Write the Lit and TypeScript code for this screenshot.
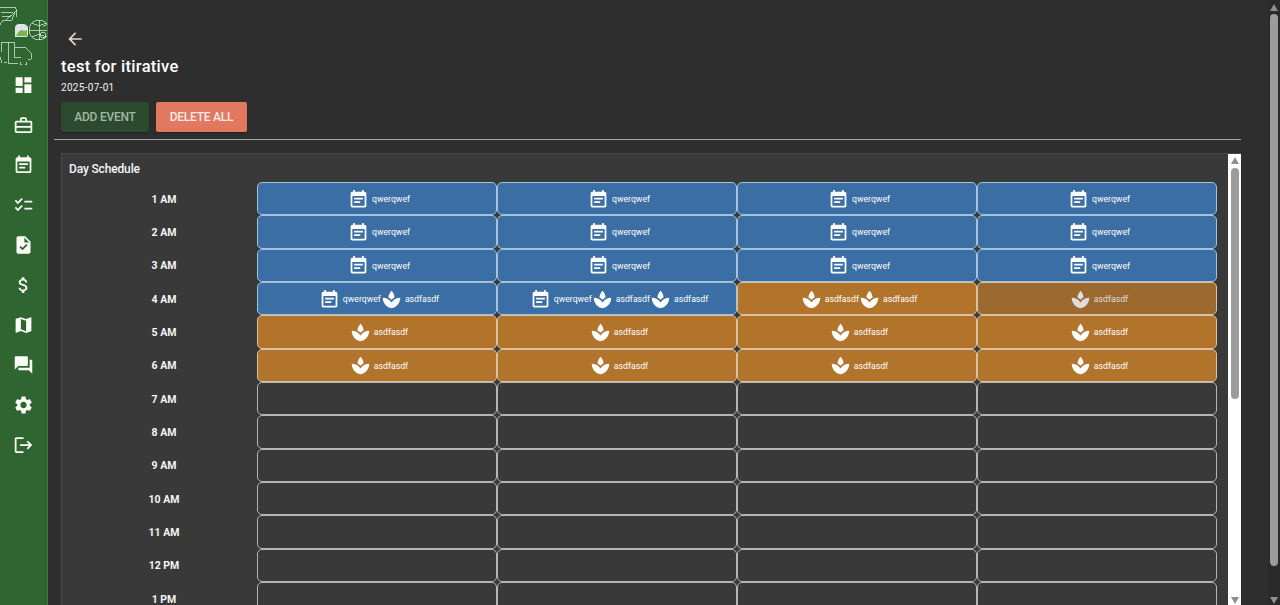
import { LitElement, html, css, svg } from "lit";
import { customElement } from "lit/decorators.js";

const P: Record<string, string> = {
  dash: "M3 13h8V3H3v10zm0 8h8v-6H3v6zm10 0h8V11h-8v10zm0-18v6h8V3h-8z",
  work: "M20 7h-4V5c0-1.1-.9-2-2-2h-4c-1.1 0-2 .9-2 2v2H4c-1.1 0-2 .9-2 2v10c0 1.1.9 2 2 2h16c1.1 0 2-.9 2-2V9c0-1.1-.9-2-2-2zM10 5h4v2h-4V5zM4 9h16v4H4V9zm0 10v-4h16v4H4z",
  note: "M17 10H7v2h10v-2zm2-7h-1V1h-2v2H8V1H6v2H5c-1.11 0-1.99.9-1.99 2L3 19c0 1.1.89 2 2 2h14c1.1 0 2-.9 2-2V5c0-1.1-.9-2-2-2zm0 16H5V8h14v11zm-5-5H7v2h7v-2z",
  check: "M22 7h-9v2h9V7zm0 8h-9v2h9v-2zM5.54 11L2 7.46l1.41-1.41 2.12 2.12 4.24-4.24 1.41 1.41L5.54 11zm0 8L2 15.46l1.41-1.41 2.12 2.12 4.24-4.24 1.41 1.41L5.54 19z",
  task: "M14 2H6c-1.1 0-1.99.9-1.99 2L4 20c0 1.1.89 2 1.99 2H18c1.1 0 2-.9 2-2V8l-6-6zm-3.06 16L7.4 14.46l1.41-1.41 2.12 2.12 4.24-4.24 1.41 1.41L10.94 18zM13 9V3.5L18.5 9H13z",
  money: "M11.8 10.9c-2.27-.59-3-1.2-3-2.15 0-1.09 1.01-1.85 2.7-1.85 1.78 0 2.44.85 2.5 2.1h2.21c-.07-1.72-1.12-3.3-3.21-3.81V3h-3v2.16c-1.94.42-3.5 1.68-3.5 3.61 0 2.31 1.91 3.46 4.7 4.13 2.5.6 3 1.48 3 2.41 0 .69-.49 1.79-2.7 1.79-2.06 0-2.87-.92-2.98-2.1h-2.2c.12 2.19 1.76 3.42 3.68 3.83V21h3v-2.15c1.95-.37 3.5-1.5 3.5-3.55 0-2.84-2.43-3.81-4.7-4.4z",
  map: "M20.5 3l-.16.03L15 5.1 9 3 3.36 4.9c-.21.07-.36.25-.36.48V20.5c0 .28.22.5.5.5l.16-.03L9 18.9l6 2.1 5.64-1.9c.21-.07.36-.25.36-.48V3.5c0-.28-.22-.5-.5-.5zM15 19l-6-2.11V5l6 2.11V19z",
  forum: "M21 6h-2v9H6v2c0 .55.45 1 1 1h11l4 4V7c0-.55-.45-1-1-1zm-4 6V3c0-.55-.45-1-1-1H3c-.55 0-1 .45-1 1v14l4-4h10c.55 0 1-.45 1-1z",
  gear: "M19.14 12.94c.04-.3.06-.61.06-.94 0-.32-.02-.64-.07-.94l2.03-1.58c.18-.14.23-.41.12-.61l-1.92-3.32c-.12-.22-.37-.29-.59-.22l-2.39.96c-.5-.38-1.03-.7-1.62-.94l-.36-2.54c-.04-.24-.24-.41-.48-.41h-3.84c-.24 0-.43.17-.47.41l-.36 2.54c-.59.24-1.13.57-1.62.94l-2.39-.96c-.22-.08-.47 0-.59.22L2.74 8.87c-.12.21-.08.47.12.61l2.03 1.58c-.05.3-.09.63-.09.94s.02.64.07.94l-2.03 1.58c-.18.14-.23.41-.12.61l1.92 3.32c.12.22.37.29.59.22l2.39-.96c.5.38 1.03.7 1.62.94l.36 2.54c.05.24.24.41.48.41h3.84c.24 0 .44-.17.47-.41l.36-2.54c.59-.24 1.13-.56 1.62-.94l2.39.96c.22.08.47 0 .59-.22l1.92-3.32c.12-.22.07-.47-.12-.61l-2.01-1.58zM12 15.6c-1.98 0-3.6-1.62-3.6-3.6s1.62-3.6 3.6-3.6 3.6 1.62 3.6 3.6-1.62 3.6-3.6 3.6z",
  logout: "M17 7l-1.41 1.41L18.17 11H8v2h10.17l-2.58 2.58L17 17l5-5zM4 5h8V3H4c-1.1 0-2 .9-2 2v14c0 1.1.9 2 2 2h8v-2H4V5z",
  back: "M20 11H7.83l5.59-5.59L12 4l-8 8 8 8 1.41-1.41L7.83 13H20v-2z",
  spa: "M15.49 9.63c-.18-2.79-1.31-5.51-3.43-7.63-2.14 2.14-3.32 4.86-3.55 7.63 1.28.68 2.46 1.56 3.49 2.63 1.03-1.06 2.21-1.94 3.49-2.63zm-6.5 2.65c-.14-.1-.3-.19-.45-.29.15.11.31.19.45.29zm6.42-.25c-.13.09-.27.16-.4.26.13-.1.27-.17.4-.26zM12 15.45C9.85 12.17 6.18 10 2 10c0 5.32 3.36 9.82 8.03 11.49.63.23 1.29.4 1.97.51.68-.12 1.33-.29 1.97-.51C18.64 19.82 22 15.32 22 10c-4.18 0-7.85 2.17-10 5.45z",
};

const icon = (name: string, cls = "") =>
  html`<svg class=${cls} viewBox="0 0 24 24"><path fill-rule="evenodd" d=${P[name]}></path></svg>`;

type Kind = "blue" | "orange" | "empty";
type Cell = { kind: Kind; items: string[]; dim?: boolean };

const Q = "q";
const A = "a";
const blue = (...items: string[]): Cell => ({ kind: "blue", items });
const orange = (...items: string[]): Cell => ({ kind: "orange", items });
const none: Cell = { kind: "empty", items: [] };

const ROWS: { label: string; cells: Cell[] }[] = [
  { label: "1 AM", cells: [blue(Q), blue(Q), blue(Q), blue(Q)] },
  { label: "2 AM", cells: [blue(Q), blue(Q), blue(Q), blue(Q)] },
  { label: "3 AM", cells: [blue(Q), blue(Q), blue(Q), blue(Q)] },
  { label: "4 AM", cells: [blue(Q, A), blue(Q, A, A), orange(A, A), { kind: "orange", items: [A], dim: true }] },
  { label: "5 AM", cells: [orange(A), orange(A), orange(A), orange(A)] },
  { label: "6 AM", cells: [orange(A), orange(A), orange(A), orange(A)] },
  ...["7 AM", "8 AM", "9 AM", "10 AM", "11 AM", "12 PM", "1 PM"].map((label) => ({
    label,
    cells: [none, none, none, none],
  })),
];

const NAV = ["dash", "work", "note", "check", "task", "money", "map", "forum", "gear", "logout"];

@customElement("app-root")
export class AppRoot extends LitElement {
  static styles = css`
    :host {
      display: flex;
      width: 1280px;
      height: 605px;
      overflow: hidden;
      background: #2e2e2e;
      color: #fff;
      font-family: Roboto, "Liberation Sans", sans-serif;
    }
    svg { display: block; fill: currentColor; flex: none; }
    .side {
      width: 47px;
      flex: none;
      background: #2e6530;
      border-right: 1px solid #44744a;
      display: flex;
      flex-direction: column;
      align-items: center;
    }
    svg.logo { width: 47px; height: 64.5px; flex: none; fill: none; shape-rendering: crispEdges; }
    .logo .solid { stroke: none; shape-rendering: auto; }
    .nav { width: 21px; height: 21px; padding: 9.5px 0; flex: none; box-sizing: content-box; color: #fdfdf8; }
    .main { flex: 1; min-width: 0; padding: 27px 27px 0 6px; display: flex; flex-direction: column; }
    .head { padding-left: 7px; display: flex; flex-direction: column; align-items: flex-start; }
    .back { width: 20px; height: 20px; margin: 2px 0 2px 4px; color: #e6d5c8; }
    h1 { margin: 6px 0 0; font-size: 16.5px; line-height: 20px; font-weight: 500; letter-spacing: 0.28px; }
    .date { margin-top: 5px; font-size: 10px; line-height: 12px; letter-spacing: 0.3px; color: #f2f2f2; }
    .btns { display: flex; gap: 7px; margin-top: 8px; }
    .btn {
      height: 30px;
      display: flex;
      align-items: center;
      justify-content: center;
      border-radius: 2px;
      font-size: 12px;
      font-weight: 500;
      letter-spacing: -0.25px;
      box-shadow: 0 1px 2px rgba(0, 0, 0, 0.3);
    }
    .add { width: 88px; background: #2b4a2e; color: #a3b8a3; }
    .del { width: 91px; background: #e2785f; color: #fbece8; }
    .rule { height: 1px; background: #a8a8a8; margin-top: 7px; flex: none; }
    .panel {
      margin: 13px 0 0 7px;
      flex: 1;
      min-height: 0;
      display: flex;
      background: #393939;
      border: 1px solid #4a4a4a;
      border-bottom: none;
      border-right: none;
      overflow: hidden;
    }
    .inner { flex: 1; min-width: 0; padding: 8px 0 0 7px; overflow: hidden; }
    .title { font-size: 12px; line-height: 14px; font-weight: 500; letter-spacing: -0.15px; color: #f5f5f5; margin-bottom: 6px; }
    .row { display: grid; grid-template-columns: 188px repeat(4, 240px); height: 33.33px; }
    .time {
      display: flex;
      align-items: center;
      justify-content: center;
      font-size: 10.5px;
      font-weight: 700;
      color: #f5f5f5;
      padding: 1px 0 0 2px;
    }
    .cell {
      box-sizing: border-box;
      border: 1px solid #b5b5b5;
      border-radius: 5px;
      display: flex;
      align-items: center;
      justify-content: center;
      padding: 1px 0 0 4px;
      min-width: 0;
      overflow: hidden;
    }
    .empty { background: #393939; }
    .blue { background: #3a6ea5; border-color: #a3c2de; }
    .orange { background: #b2742b; border-color: #d8c2a2; }
    .dim { background: #9c6a2f; color: #dddddd; }
    .item { display: flex; align-items: center; }
    .item svg { width: 21px; height: 21px; }
    .item span { font-size: 8.7px; line-height: 12px; margin-left: 3px; color: inherit; white-space: nowrap; }
    .bar { width: 13px; flex: none; display: flex; flex-direction: column; align-items: center; background: #fff; padding: 3px 0 0; box-sizing: border-box; }
    .pagebar { width: 12px; flex: none; display: flex; flex-direction: column; align-items: center; background: #2a2a2a; padding-top: 4px; box-sizing: border-box; }
    .up, .down { width: 0; height: 0; border-left: 4.5px solid transparent; border-right: 4.5px solid transparent; flex: none; }
    .up { border-bottom: 7px solid #8f8f8f; }
    .down { border-top: 7px solid #8f8f8f; }
    .thumb { width: 8px; background: #9c9c9c; border-radius: 4px; flex: none; }
    .bar .thumb { height: 231px; margin-top: 4px; }
    .gap { flex: 1; }
    .bar .down { margin-bottom: 1px; }
    .pagebar .thumb { height: 552px; margin-top: 3px; }
    .pagebar .down { margin-bottom: 1px; }
  `;

  private logo() {
    return svg`<svg class="logo" viewBox="0 0 47 64.5" stroke="#e6f0e2" stroke-width="0.7">
      <path d="M0 7h15l2 3-6 6H2M1 12h12M15 12l-3 8H3l-3 5M6 20l5-5M16 10v7"></path>
      <path d="M2 42h12l1 5h10l6 6v6h-3M1 42v10M2 63l-2-6M8 42v21h10M14 47v10h7M20 62a3 3 0 0 0 7 0M4 62h3"></path>
      <circle cx="39" cy="30" r="10"></circle>
      <path d="M29 30h20M39 20v20M32 23c4 3 10 3 14 0M32 37c4-3 10-3 14 0"></path>
      <circle cx="43" cy="35" r="3"></circle>
      <path d="M47 24l-4 3"></path>
      <path class="solid" d="M15 27q1-3 4-3h5q4 1 4 4v7q0 2-2 2H15z" fill="#dfe6ea"></path>
      <path class="solid" d="M17 34q4-6 7-3l3-1v6H16z" fill="#7ab64e"></path>
    </svg>`;
  }

  private item(t: string) {
    return html`<div class="item">${icon(t === Q ? "note" : "spa")}<span>${t === Q ? "qwerqwef" : "asdfasdf"}</span></div>`;
  }

  render() {
    return html`
      <aside class="side">
        ${this.logo()}
        ${NAV.map((n) => icon(n, "nav"))}
      </aside>
      <main class="main">
        <div class="head">
          ${icon("back", "back")}
          <h1>test for itirative</h1>
          <div class="date">2025-07-01</div>
          <div class="btns">
            <div class="btn add">ADD EVENT</div>
            <div class="btn del">DELETE ALL</div>
          </div>
        </div>
        <div class="rule"></div>
        <section class="panel">
          <div class="inner">
            <div class="title">Day Schedule</div>
            ${ROWS.map(
              (r) => html`<div class="row">
                <div class="time">${r.label}</div>
                ${r.cells.map(
                  (c) => html`<div class="cell ${c.kind} ${c.dim ? "dim" : ""}">${c.items.map((t) => this.item(t))}</div>`
                )}
              </div>`
            )}
          </div>
          <div class="bar"><div class="up"></div><div class="thumb"></div><div class="gap"></div><div class="down"></div></div>
        </section>
      </main>
      <div class="pagebar"><div class="up"></div><div class="thumb"></div><div class="gap"></div><div class="down"></div></div>
    `;
  }
}
